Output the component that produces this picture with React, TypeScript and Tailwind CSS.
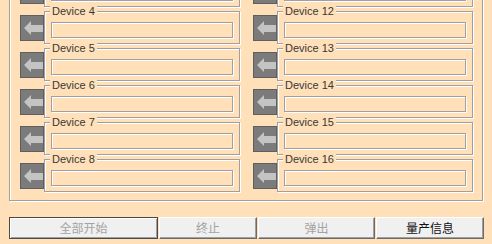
import React from "react";

const BG = "bg-[#FFE0B8]";

function ArrowButton() {
  return (
    <div className="mt-[4px] h-[26px] w-[24px] shrink-0 border border-[#5e5e5e] bg-[#7b7b7b]">
      <svg width="22" height="24" viewBox="0 0 22 24">
        <polygon
          points="3,12 10,5 10,9 22,9 22,16 10,16 10,19"
          fill="#c4c4c4"
        />
      </svg>
    </div>
  );
}

function DeviceRow({ n }: { n: number }) {
  return (
    <div className="flex h-[33px]">
      <ArrowButton />
      <div className="w-[196px] border border-[#a0a0a0] shadow-[inset_1px_1px_0_#fff,1px_1px_0_#fff]">
        <div
          className={`-mt-[7px] ml-[5px] w-fit px-[2px] text-[11px] leading-[13px] text-[#383838] ${BG}`}
        >
          Device {n}
        </div>
        <div className="ml-[6px] mt-[4px] h-[16px] w-[182px] border border-[#a0a0a0] shadow-[inset_1px_1px_0_#fff,1px_1px_0_#fff]" />
      </div>
    </div>
  );
}

export default function App() {
  // list is scrolled: rows above Device 3 / 11 are out of view
  const left = [3, 4, 5, 6, 7, 8];
  const right = [11, 12, 13, 14, 15, 16];

  const buttons = [
    { label: "全部开始", w: "w-[149px]", enabled: false, def: true },
    { label: "终止", w: "w-[98px]", enabled: false, def: false },
    { label: "弹出", w: "w-[117px]", enabled: false, def: false },
    { label: "量产信息", w: "w-[108px]", enabled: true, def: false },
  ];

  return (
    <div
      className={`h-[244px] w-[492px] overflow-hidden ${BG} font-['Liberation_Sans','Noto_Sans_CJK_SC',sans-serif]`}
    >
      <div className="-mt-[46px] ml-[9px] grid w-[474px] grid-cols-[220px_220px] gap-x-[13px] border border-[#a0a0a0] pb-[8px] pl-[10px] pr-[9px] pt-[19px] shadow-[inset_1px_1px_0_#fff,1px_1px_0_#fff]">
        <div className="flex flex-col gap-[4px]">
          {left.map((n) => (
            <DeviceRow key={n} n={n} />
          ))}
        </div>
        <div className="flex flex-col gap-[4px]">
          {right.map((n) => (
            <DeviceRow key={n} n={n} />
          ))}
        </div>
      </div>

      <div className="ml-[9px] mt-[16px] flex gap-[1px]">
        {buttons.map((b) => (
          <div
            key={b.label}
            className={`flex h-[22px] ${b.w} items-center justify-center bg-[#f0f0f0] text-[12px] font-['Noto_Sans_CJK_SC',sans-serif] ${
              b.def
                ? "border border-[#4a4a4a] shadow-[inset_1px_1px_0_#fff,inset_-1px_-1px_0_#a0a0a0]"
                : "border border-b-[#6a6a6a] border-l-white border-r-[#6a6a6a] border-t-white shadow-[inset_-1px_-1px_0_#a0a0a0]"
            } ${b.enabled ? "text-[#111]" : "text-[#a3a3a3]"}`}
          >
            {b.label}
          </div>
        ))}
      </div>
    </div>
  );
}
